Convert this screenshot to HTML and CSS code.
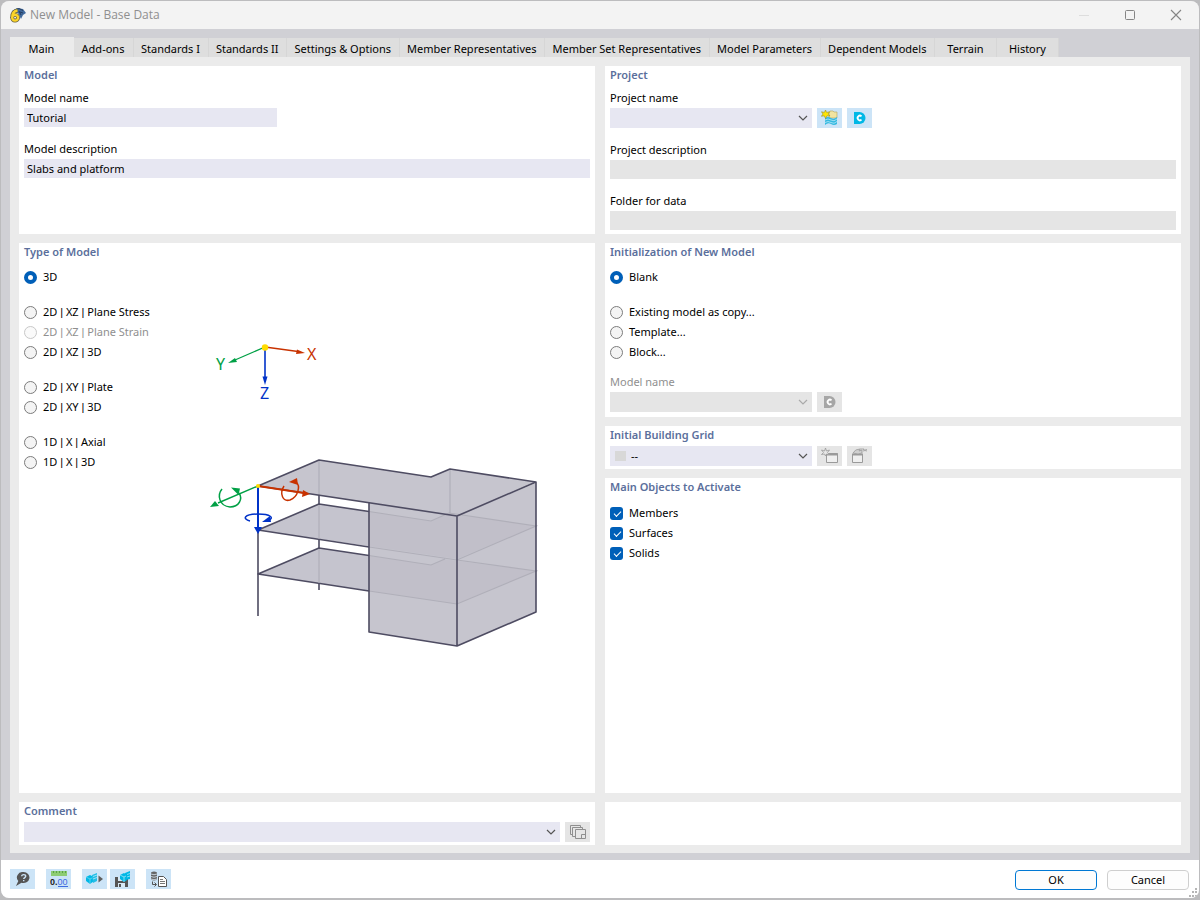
FILE: index.html
```html
<!DOCTYPE html>
<html lang="en">
<head>
<meta charset="utf-8">
<title>New Model - Base Data</title>
<link rel="stylesheet" href="styles.css">
</head>
<body>
<div class="window">
  <header class="titlebar">
    <svg class="app-icon" width="17" height="16" viewBox="0 0 17 16"><path d="M3 4 8 1l6 1 3 4-3 2-2 4-3-6-4-1z" fill="#40699c"/><path d="M6 3l4-1.500 4 2M11 5l3 1M10 4l2 4" stroke="#253d60" fill="none"/><path d="M8.500 3.500C4.500 4 3.200 7 3.200 10.500a2.900 2.900 0 1 0 2.900-2.700c-1.600 0-2.900 1-2.900 2.700" fill="none" stroke="#6b6440" stroke-width="4"/><path d="M8.500 3.500C4.500 4 3.200 7 3.200 10.500a2.900 2.900 0 1 0 2.900-2.700c-1.600 0-2.900 1-2.900 2.700" fill="none" stroke="#fbd42a" stroke-width="2.400"/></svg>
    <h1 class="title">New Model - Base Data</h1>
    <div class="caption-buttons">
      <button class="caption" aria-label="Minimize" disabled><svg width="12" height="12" viewBox="0 0 12 12"><path d="M1 6.500h10" stroke="#ddd"/></svg></button>
      <button class="caption" aria-label="Maximize"><svg width="12" height="12" viewBox="0 0 12 12"><rect x="1.500" y="1.500" width="9" height="9" rx="1" fill="none" stroke="#858585"/></svg></button>
      <button class="caption" aria-label="Close"><svg width="12" height="12" viewBox="0 0 12 12"><path d="M1 1l10 10M11 1 1 11" stroke="#858585" stroke-width="1.100"/></svg></button>
    </div>
  </header>

  <main class="workspace">
    <nav class="tabs" role="tablist">
      <button class="tab active" role="tab" aria-selected="true">Main</button>
      <button class="tab" role="tab">Add-ons</button>
      <button class="tab" role="tab">Standards I</button>
      <button class="tab" role="tab">Standards II</button>
      <button class="tab" role="tab">Settings &amp; Options</button>
      <button class="tab" role="tab">Member Representatives</button>
      <button class="tab" role="tab">Member Set Representatives</button>
      <button class="tab" role="tab">Model Parameters</button>
      <button class="tab" role="tab">Dependent Models</button>
      <button class="tab" role="tab">Terrain</button>
      <button class="tab" role="tab">History</button>
    </nav>

    <div class="panel">
      <section class="card">
        <h2 class="heading">Model</h2>
        <div class="fields">
          <div class="field"><label for="model-name">Model name</label><input class="text short" id="model-name" type="text" value="Tutorial"></div>
          <div class="field"><label for="model-desc">Model description</label><input class="text" id="model-desc" type="text" value="Slabs and platform"></div>
        </div>
      </section>

      <section class="card">
        <h2 class="heading">Project</h2>
        <div class="fields">
          <div class="field"><label for="project-name">Project name</label>
            <div class="line">
              <div class="combo"><select id="project-name"><option></option></select><svg class="chevron" width="10" height="6" viewBox="0 0 10 6"><path d="M1 1l4 4 4-4"/></svg></div>
              <button class="tool" aria-label="New project"><svg width="17" height="16" viewBox="0 0 17 16"><path d="M8 3l1-2h3l1 1h3v6H8z" fill="#f1e4a0" stroke="#b9ac67" stroke-width=".7"/><path d="M4 8q3-2 6 0t6-1v7q-3 2-6 0t-6 1z" fill="#35b9e0"/><path d="M4 10q3-2 6 0t6-1M4 12.500q3-2 6 0t6-1" fill="none" stroke="#b9e9f7" stroke-width=".8"/><path d="M4.500 0 5.600 2.400 8.500 1.800 7.300 4 9 6 6 5.800 4.500 8.500 3.300 5.800.4 6.300 2 4 .5 1.800 3.400 2.400z" fill="#ffe500" stroke="#998d28" stroke-width=".6"/></svg></button>
              <button class="tool" aria-label="Project manager"><svg width="12" height="14" viewBox="0 0 12 14"><path d="M0 1h5.500a6 6 0 0 1 0 12H0z" fill="#00b8e6"/><path d="M7.500 5.300A2.300 2.300 0 1 0 7.500 8.700" stroke="#fff" stroke-width="1.800" fill="none"/></svg></button>
            </div>
          </div>
          <div class="field"><label for="project-desc">Project description</label><input class="text" id="project-desc" type="text" disabled></div>
          <div class="field"><label for="folder">Folder for data</label><input class="text" id="folder" type="text" disabled></div>
        </div>
      </section>

      <section class="card">
        <h2 class="heading">Type of Model</h2>
        <div class="type-body">
          <div class="choices">
            <div class="group"><label class="choice"><input type="radio" name="type" checked>3D</label></div>
            <div class="group">
              <label class="choice"><input type="radio" name="type"><span>2D <span class="bar">|</span> XZ <span class="bar">|</span> Plane Stress</span></label>
              <label class="choice off"><input type="radio" name="type" disabled><span>2D <span class="bar">|</span> XZ <span class="bar">|</span> Plane Strain</span></label>
              <label class="choice"><input type="radio" name="type"><span>2D <span class="bar">|</span> XZ <span class="bar">|</span> 3D</span></label>
            </div>
            <div class="group">
              <label class="choice"><input type="radio" name="type"><span>2D <span class="bar">|</span> XY <span class="bar">|</span> Plate</span></label>
              <label class="choice"><input type="radio" name="type"><span>2D <span class="bar">|</span> XY <span class="bar">|</span> 3D</span></label>
            </div>
            <div class="group">
              <label class="choice"><input type="radio" name="type"><span>1D <span class="bar">|</span> X <span class="bar">|</span> Axial</span></label>
              <label class="choice"><input type="radio" name="type"><span>1D <span class="bar">|</span> X <span class="bar">|</span> 3D</span></label>
            </div>
          </div>
          <svg class="drawing" width="350" height="325" viewBox="200 335 350 325" role="img" aria-label="3D model with axes">
            <!-- coordinate axes -->
            <g fill="none" stroke-width="1.300">
              <path d="M265 347l33 4.500" stroke="#c83200"/><path d="M265 347l-30 13" stroke="#00a045"/><path d="M265 347v32" stroke="#0032c8" stroke-width="1.600"/>
            </g>
            <path d="M305 353l-9 1 1-4.500z" fill="#c83200"/><path d="M228 363l7-5 2 4z" fill="#00a045"/><path d="M265 385l-2.500-8.500h5z" fill="#0032c8"/>
            <circle cx="265" cy="347.500" r="3.200" fill="#ffdc00"/>
            <text class="axis x" x="307" y="360">X</text><text class="axis y" x="216" y="370">Y</text><text class="axis z" x="260" y="399">Z</text>
            <!-- columns and slabs seen behind the walls -->
            <path class="edge" d="M319 495v95M258 486v130"/>
            <g class="slab">
              <path d="M258 574l61-26 112 17 12-6 93 12-79 33z"/>
              <path d="M258 530l61-26 112 17 18-8 87 13-79 33z"/>
            </g>
            <path class="edge" d="M369 591l-111-17 61-26 50 7.500M369 547l-111-17 61-26 50 7.500"/>
            <path class="wall" d="M369 503l88 13v130l-88-14z"/>
            <path class="wall" d="M457 516l79-33v129l-79 34z"/>
            <path class="roof" d="M258 486l61-26 112 17 19-8 86 13-79 34z"/>
            <g class="ghost"><path d="M319 461v34M319 505v34M319 549v34M450 470v45M369 511.500l62 9.500 18-8M369 555.500l62 9.500 14-6M449 513l87 13-79 34-88-13M457 560l79 11-79 33-88-13"/></g>
            <path class="edge" d="M258 486l61-26 112 17 19-8 86 13-79 34zM369 503v129l88 14 79-34V482M457 516v130"/>
            <!-- local axes with rotations -->
            <path d="M258 486v44" stroke="#0032c8" stroke-width="2"/><path d="M258 534l-4-7h8z" fill="#0032c8"/>
            <path d="M258 486l-40 17" stroke="#00a045" stroke-width="1.400"/><path d="M210 507l5-6 4 5z" fill="#00a045"/>
            <path d="M258 486l46 7" stroke="#c83200" stroke-width="2"/><path d="M310 494l-8 3 1-7z" fill="#c83200"/>
            <g fill="none" stroke-width="1.500">
              <path d="M222 489c-5 6-3 17 8 18 9 0 13-8 9-14" stroke="#00a045"/>
              <path d="M284 486c-5 8-1 16 6 14 8-3 11-14 6-18" stroke="#c83200"/>
              <path d="M250 521c-8-2-6-7 8-7 13 0 16 4 11 6" stroke="#0032c8"/>
            </g>
            <path d="M231 487.500l9 1-1.500 6.500z" fill="#00a045"/><path d="M289 482l8-4 1 7z" fill="#c83200"/><path d="M262 522l8-6 1 6z" fill="#0032c8"/>
            <circle cx="258" cy="486" r="2" fill="#ffdc00"/>
          </svg>
        </div>
      </section>

      <div class="stack">
        <section class="card">
          <h2 class="heading">Initialization of New Model</h2>
          <div class="choices">
            <div class="group"><label class="choice"><input type="radio" name="init" checked>Blank</label></div>
            <div class="group">
              <label class="choice"><input type="radio" name="init">Existing model as copy...</label>
              <label class="choice"><input type="radio" name="init">Template...</label>
              <label class="choice"><input type="radio" name="init">Block...</label>
            </div>
          </div>
          <div class="field source off"><label for="source">Model name</label>
            <div class="line">
              <div class="combo"><select id="source" disabled><option></option></select><svg class="chevron" width="10" height="6" viewBox="0 0 10 6"><path d="M1 1l4 4 4-4"/></svg></div>
              <button class="tool" aria-label="Browse models" disabled><svg width="12" height="14" viewBox="0 0 12 14"><path d="M0 1h5.500a6 6 0 0 1 0 12H0z" fill="#a6a6a6"/><path d="M7.500 5.300A2.300 2.300 0 1 0 7.500 8.700" stroke="#fff" stroke-width="1.800" fill="none"/></svg></button>
            </div>
          </div>
        </section>
        <section class="card compact">
          <h2 class="heading" id="grid-title">Initial Building Grid</h2>
          <div class="line">
            <div class="combo swatched"><select aria-labelledby="grid-title"><option>--</option></select><span class="swatch"></span><svg class="chevron" width="10" height="6" viewBox="0 0 10 6"><path d="M1 1l4 4 4-4"/></svg></div>
            <button class="tool" aria-label="New grid" disabled><svg width="17" height="16" viewBox="0 0 17 16" fill="none" stroke="#9a9a9a"><path d="M5.500 5.500h11v9h-11z" fill="#efefef"/><path d="M5 6.500h12" stroke-width="2"/><path d="M4.500 0l1 3 3-1-2 2.500 2 2-3-.5-1 2-1-2-3 .5 2-2-2-2.500 3 1z" fill="#e6e6e6" stroke-width=".8"/></svg></button>
            <button class="tool" aria-label="Edit grid" disabled><svg width="17" height="16" viewBox="0 0 17 16" fill="none" stroke="#9a9a9a"><path d="M1.500 6.500h10v8h-10z" fill="#efefef"/><path d="M1 6.500h11" stroke-width="2"/><path d="M2 5q2-4 7-4l-1 2 3-1v3l-4 1z" fill="#cfcfcf" stroke-width=".8"/><path d="M9 1h4M12 3q2-1 4 0M12 1.500q2 1 4 0" stroke-width=".8"/></svg></button>
          </div>
        </section>
        <section class="card grow">
          <h2 class="heading">Main Objects to Activate</h2>
          <div class="choices checks">
            <label class="choice"><input type="checkbox" checked>Members</label>
            <label class="choice"><input type="checkbox" checked>Surfaces</label>
            <label class="choice"><input type="checkbox" checked>Solids</label>
          </div>
        </section>
      </div>

      <section class="card compact">
        <h2 class="heading" id="comment-title">Comment</h2>
        <div class="line">
          <div class="combo wide"><select aria-labelledby="comment-title"><option></option></select><svg class="chevron" width="10" height="6" viewBox="0 0 10 6"><path d="M1 1l4 4 4-4"/></svg></div>
          <button class="tool" aria-label="Apply comment" disabled><svg width="16" height="14" viewBox="0 0 16 14" fill="#e6e6e6" stroke="#8f8f8f"><path d="M.5.500h10v9H.5z"/><path d="M2.500 2.500h10v9h-10z"/><path d="M5.500 4.500h10v9h-10z"/><path d="M11.500 13v-3.500h4" fill="none"/></svg></button>
        </div>
      </section>
      <section class="card"></section>
    </div>
  </main>

  <footer class="footer">
    <div class="footer-tools">
      <button class="tool apart" aria-label="Help"><svg width="15" height="14" viewBox="0 0 15 14"><path d="M8.500 0a6 5.500 0 1 1-2 10.700L1 14l2.300-5A6 5.500 0 0 1 8.500 0z" fill="#555"/><path d="M6.700 4.300c0-2.300 4-2.200 4 0 0 1.300-2 1.200-2 2.700M8.700 8v1.300" fill="none" stroke="#cce4f7" stroke-width="1.400"/></svg></button>
      <button class="tool apart" aria-label="Units and decimal places"><svg width="18" height="16" viewBox="0 0 18 16"><path d="M1 0h16v5H1z" fill="#8dcc73"/><path d="M3.500 0v2M6.500 0v2M9.500 0v2M12.500 0v2M15.500 0v2" stroke="#5aa347"/><text class="digits" x="0" y="14">0.<tspan class="decimals">00</tspan></text><path d="M8 15.500h10" stroke="#3d6ae0"/></svg></button>
      <button class="tool" aria-label="Load defaults"><svg width="17" height="12" viewBox="0 0 17 12"><path d="M0 4l4-2 4 2v4l-4 3-4-3z" fill="#00b8e6"/><path d="M0 4l4 2 4-2M4 6v5" stroke="#80daf2" stroke-width=".7" fill="none"/><path d="M6 2l5-2v8l-4 2z" fill="#24bde6"/><path d="M7 3.500l4-1.500M7 6l4-1.500" stroke="#b4ecf9" stroke-width=".8"/><path d="M12.500 2.500 17 6l-4.500 3.500z" fill="#606060"/></svg></button>
      <button class="tool apart" aria-label="Save as default"><svg width="18" height="17" viewBox="0 0 18 17"><path d="M1 6h11l2 2v8H1z" fill="#555"/><path d="M4 6h6v4H4zM4 12h7v4H4z" fill="#d7e8f4"/><path d="M5 13h2v3H5zM8 7h1.500v2H8z" fill="#555"/><path d="M6 4l4-2 3 2v5l-3 2-4-3zM11 2l5-2v8l-4 1z" fill="#00b8e6"/><path d="M6 4l4 2 2-1M10 6v5M13 3.500l3-1M13 6l3-1" stroke="#a1e6f6" stroke-width=".8" fill="none"/></svg></button>
      <button class="tool" aria-label="Copy from database"><svg width="17" height="16" viewBox="0 0 17 16" fill="none"><path d="M1 1.500q3-2 6 0v7q-3 2-6 0z" fill="#666"/><path d="M1 3q3 1.500 6 0M1 5.500q3 1.500 6 0M1 8q3 1.500 6 0" stroke="#dceaf5" stroke-width=".8"/><path d="M2.500 10.500v3H6M4.500 11.500l2 2-2 2" stroke="#555"/><path d="M8.500 5.500h5l3 3v7h-8z" fill="#fff" stroke="#555"/><path d="M10 8.500h3M10 10.500h5M10 12.500h5" stroke="#777"/></svg></button>
    </div>
    <div class="actions">
      <button class="action primary">OK</button>
      <button class="action">Cancel</button>
    </div>
    <svg class="grip" width="10" height="10" viewBox="0 0 10 10" fill="#b5b5b5"><path d="M7 0h2v2H7zM4 3h2v2H4zM7 3h2v2H7zM1 7h2v2H1zM4 7h2v2H4zM7 7h2v2H7z"/></svg>
  </footer>
</div>
</body>
</html>
```
FILE: styles.css
```css
* { box-sizing: border-box; }

body {
  margin: 0;
  min-height: 100vh;
  padding: 1px 1px 2px;
  display: flex;
  background: #bcbcbe;
  font-family: "Noto Sans", "Open Sans", sans-serif;
  font-size: 11px;
  line-height: 16px;
  color: #000;
}

button, input, select { font: inherit; color: inherit; margin: 0; }
button { border: 0; padding: 0; display: flex; align-items: center; justify-content: center; }
h1, h2 { margin: 0; font-weight: 400; }
svg { flex: none; }

.window {
  flex: 1;
  display: flex;
  flex-direction: column;
  background: #d0d0d5;
  border-radius: 8px;
  overflow: hidden;
}

.titlebar { display: flex; align-items: center; height: 28px; padding-left: 8px; background: #f3f3f3; }
.title { margin-left: 4px; font-family: "Open Sans", sans-serif; font-size: 12px; color: #8f8f8f; }
.caption-buttons { display: flex; margin-left: auto; }
.caption { width: 46px; height: 27px; background: none; }

.workspace { flex: 1; display: flex; flex-direction: column; padding: 8px 9px 7px; }
.tabs { display: flex; align-items: flex-end; }
.tab { height: 19px; min-width: 62px; padding: 2px 8px 0 7px; background: #dedede; border-right: 1px solid #d6d6d6; white-space: nowrap; }
.tab:nth-child(2) { min-width: 60px; }
.tab.active { height: 20px; min-width: 64px; padding-top: 3px; background: #ebebeb; border: 0; }

.panel {
  flex: 1;
  display: grid;
  grid-template-columns: minmax(0, 1fr) minmax(0, 1fr);
  grid-template-rows: auto 1fr auto;
  gap: 9px 10px;
  padding: 9px 9px 8px;
  background: #ebebeb;
}
.card { padding: 0 5px 4px; background: #fff; }
.compact { padding-bottom: 3px; }
.compact .heading { margin-bottom: 3px; }
.stack { display: flex; flex-direction: column; gap: 9px; }
.grow { flex: 1; }
.heading { font-size: 11px; font-weight: 600; line-height: 17px; color: #5b6f9c; }

.fields { display: flex; flex-direction: column; gap: 14px; padding-top: 7px; }
.field { display: flex; flex-direction: column; gap: 2px; }
.text { width: 100%; height: 19px; padding: 0 3px; border: 0; background: #e7e7f2; }
.text:disabled { background: #e5e5e5; }
.short { width: 253px; }

.line { display: flex; gap: 5px; }
.combo { position: relative; width: 202px; height: 20px; }
.wide { width: auto; flex: 1; }
.combo select { appearance: none; width: 100%; height: 100%; padding: 0 22px 0 4px; border: 0; border-radius: 0; background: #e7e7f2; }
.combo select:disabled { background: #e5e5e5; opacity: 1; }
.swatched select { padding-left: 21px; }
.swatch { position: absolute; left: 5px; top: 5px; width: 11px; height: 10px; background: #d8d8d8; pointer-events: none; }
.chevron { position: absolute; right: 4px; top: 7px; pointer-events: none; fill: none; stroke: #555; stroke-width: 1.2; }
.off .chevron { stroke: #aaa; }
.tool { width: 25px; height: 20px; background: #cce4f7; }
.tool:disabled { background: #e5e5e5; }

.type-body { display: flex; }
.type-body .choices { width: 176px; }
.type-body .drawing { margin-top: 75px; }
.choices { display: flex; flex-direction: column; padding-top: 7px; }
.checks { padding-top: 8px; }
.group { display: flex; flex-direction: column; }
.group + .group { margin-top: 15px; }
.choice { display: flex; align-items: center; gap: 6px; height: 20px; white-space: nowrap; }
.bar { font-family: "Liberation Sans", sans-serif; }
.off { color: #8f8f8f; }
.source { margin: 12px 0 1px; }

.choice input { appearance: none; flex: none; width: 13px; height: 13px; }
.choice input[type="radio"] { border: 1px solid #7c7c7c; border-radius: 50%; background: #f4f4f4; }
.choice input[type="radio"]:checked { border: 4px solid #005fb8; background: #fff; }
.choice input[type="radio"]:disabled { border-color: #c8c8c8; background: #fafafa; }
.choice input[type="checkbox"] { position: relative; border-radius: 3px; background: #005fb8; }
.choice input[type="checkbox"]::after {
  content: "";
  position: absolute;
  left: 4px;
  top: 4px;
  width: 6px;
  height: 3px;
  border: solid #fff;
  border-width: 0 0 1px 1px;
  transform: rotate(-45deg);
}

.axis { font: 16px "Noto Sans", sans-serif; }
.x { fill: #c83200; }
.y { fill: #00a045; }
.z { fill: #0032c8; }
.edge { fill: none; stroke: #4e4c62; stroke-width: 1.6; stroke-linejoin: round; }
.slab { fill: #c5c4ce; }
.wall, .roof { fill: #c0bfc9; fill-opacity: 0.9; }
.ghost { fill: none; stroke: #b0afb9; stroke-width: 1.2; }

.footer { position: relative; display: flex; align-items: center; justify-content: space-between; height: 38px; padding: 0 10px 0 9px; background: #fff; }
.footer-tools { display: flex; gap: 3px; }
.apart { margin-right: 8px; }
.digits { font: 700 9px "Liberation Sans", sans-serif; fill: #222; }
.decimals { font-weight: 400; fill: #3d6ae0; }
.actions { display: flex; gap: 10px; padding-top: 2px; }
.action { width: 82px; height: 20px; border: 1px solid #cfcfcf; border-radius: 4px; background: #fdfdfd; }
.primary { border-color: #0078d4; }
.grip { position: absolute; right: 1px; bottom: 0; }
```
